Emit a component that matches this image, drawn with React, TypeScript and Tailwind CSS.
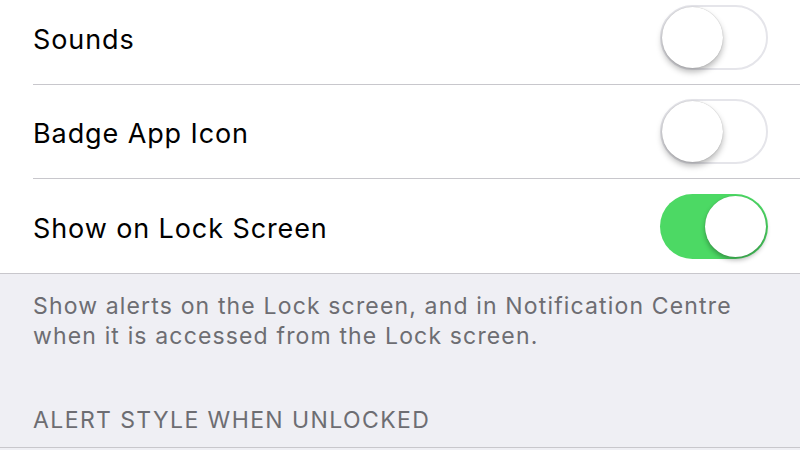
const rows = [
  { label: "Sounds", on: false },
  { label: "Badge App Icon", on: false },
  { label: "Show on Lock Screen", on: true },
];

const Toggle = ({ on }: { on: boolean }) => {
  if (on) {
    return (
      <div className="relative w-[108px] h-[65px] rounded-full bg-[#4cd964]">
        <div className="absolute right-[2px] top-[2px] w-[61px] h-[61px] rounded-full bg-white shadow-[0_3px_5px_rgba(0,0,0,0.3),0_0_1px_rgba(0,0,0,0.2)]" />
      </div>
    );
  }
  return (
    <div className="relative w-[108px] h-[65px] rounded-full bg-white border-[2px] border-[#e5e5ea]">
      <div className="absolute left-0 top-0 w-[61px] h-[61px] rounded-full bg-white shadow-[0_4px_6px_rgba(0,0,0,0.28),0_0_1px_rgba(0,0,0,0.3)]" />
    </div>
  );
};

const App = () => {
  return (
    <div className="w-[800px] h-[450px] overflow-hidden bg-[#efeff4] font-['Inter',sans-serif]">
      {/* Switch rows */}
      <div className="bg-white -mt-[9px] border-b border-[#c8c7cc]">
        {rows.map((row, index) => (
          <div key={index} className="pl-[33px]">
            <div
              className={`h-[94px] flex items-center justify-between pr-[32px] ${
                index < rows.length - 1 ? "border-b border-[#c8c7cc]" : "h-[93px]"
              }`}
            >
              <span className="mt-[6px] text-[27px] text-black tracking-[0.9px]">{row.label}</span>
              <Toggle on={row.on} />
            </div>
          </div>
        ))}
      </div>

      {/* Footer + section header */}
      <div className="px-[33px] pt-[17px] text-[#6d6d72] text-[23px] leading-[30px]">
        <p className="tracking-[1.15px]">
          Show alerts on the Lock screen, and in Notification Centre
          <br />
          when it is accessed from the Lock screen.
        </p>
        <p className="mt-[54px] tracking-[1.4px]">ALERT STYLE WHEN UNLOCKED</p>
      </div>
      <div className="mt-[12px] border-b border-[#c8c7cc]" />
    </div>
  );
};

export default App;
